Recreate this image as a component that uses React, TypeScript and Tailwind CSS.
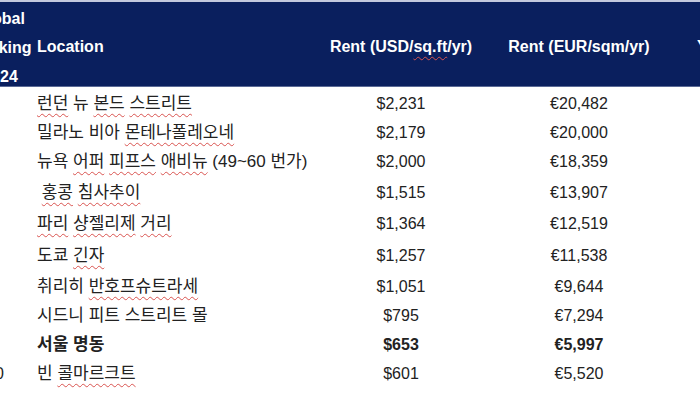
const rows = [
  { rank: "1", parts: [["런던", true], " 뉴 ", ["본드", true], " ", ["스트리트", true]], usd: "$2,231", eur: "€20,482", h: "h-[29px]" },
  { rank: "2", parts: ["밀라노 비아 ", ["몬테나폴레오네", true]], usd: "$2,179", eur: "€20,000", h: "h-[29px]" },
  { rank: "3", parts: ["뉴욕 ", ["어퍼", true], " ", ["피프스", true], " ", ["애비뉴", true], " (49~60 번가)"], usd: "$2,000", eur: "€18,359", h: "h-[30px]" },
  { rank: "4", parts: [" ", ["홍콩", true], " ", ["침사추이", true]], usd: "$1,515", eur: "€13,907", h: "h-[31px]" },
  { rank: "5", parts: [["파리", true], " ", ["샹젤리제", true], " ", ["거리", true]], usd: "$1,364", eur: "€12,519", h: "h-[32px]" },
  { rank: "6", parts: ["도쿄 ", ["긴자", true]], usd: "$1,257", eur: "€11,538", h: "h-[32px]" },
  { rank: "7", parts: ["취리히 ", ["반호프슈트라세", true]], usd: "$1,051", eur: "€9,644", h: "h-[29px]" },
  { rank: "8", parts: ["시드니 피트 스트리트 몰"], usd: "$795", eur: "€7,294", h: "h-[29px]" },
  { rank: "9", parts: ["서울 명동"], usd: "$653", eur: "€5,997", h: "h-[29px]", bold: true },
  { rank: "10", parts: ["빈 ", ["콜마르크트", true]], usd: "$601", eur: "€5,520", h: "h-[30px]" },
] as const;

// red spell-check squiggle, as in the screenshot
const squiggle = "underline decoration-wavy decoration-[#d9534f] decoration-1 underline-offset-[4px]";

const Location = ({ parts }: { parts: readonly (string | readonly [string, boolean])[] }) => (
  <>
    {parts.map((p, i) =>
      typeof p === "string" ? (
        <span key={i} className="whitespace-pre">{p}</span>
      ) : (
        <span key={i} className={squiggle}>{p[0]}</span>
      )
    )}
  </>
);

export default function App() {
  return (
    <div className="w-[700px] h-[400px] overflow-hidden bg-white font-['Liberation_Sans','Noto_Sans_CJK_KR',sans-serif]">
      <div className="h-[2px] bg-[#c3c9de]" />
      <div className="-ml-[37px] w-[820px]">
        {/* Header */}
        <div className="flex items-center h-[85px] pt-[6px] bg-[#0a1f5e] border-b border-[#5b6a96] text-white font-bold text-[16px]">
          <div className="w-[74px] shrink-0 text-center leading-[29px] whitespace-nowrap">
            <div>Global</div>
            <div>Ranking</div>
            <div>2024</div>
          </div>
          <div className="w-[283px] shrink-0">Location</div>
          <div className="w-[162px] shrink-0 text-center whitespace-nowrap">
            Rent (USD/<span className={squiggle}>sq.ft</span>/yr)
          </div>
          <div className="w-[194px] shrink-0 text-center whitespace-nowrap">Rent (EUR/sqm/yr)</div>
          <div className="pl-[21px] whitespace-nowrap">YoY</div>
        </div>

        {/* Body */}
        <div className="pt-[2px]">
          {rows.map((r) => (
            <div
              key={r.rank}
              className={`flex items-center ${r.h} text-[16px] text-[#222] ${"bold" in r && r.bold ? "font-bold" : ""}`}
            >
              <div className="w-[74px] shrink-0 text-center pr-[10px]">{r.rank}</div>
              <div className="w-[283px] shrink-0 whitespace-nowrap text-[17px]">
                <Location parts={r.parts} />
              </div>
              <div className="w-[162px] shrink-0 text-center">{r.usd}</div>
              <div className="w-[194px] shrink-0 text-center">{r.eur}</div>
            </div>
          ))}
        </div>
      </div>
    </div>
  );
}
